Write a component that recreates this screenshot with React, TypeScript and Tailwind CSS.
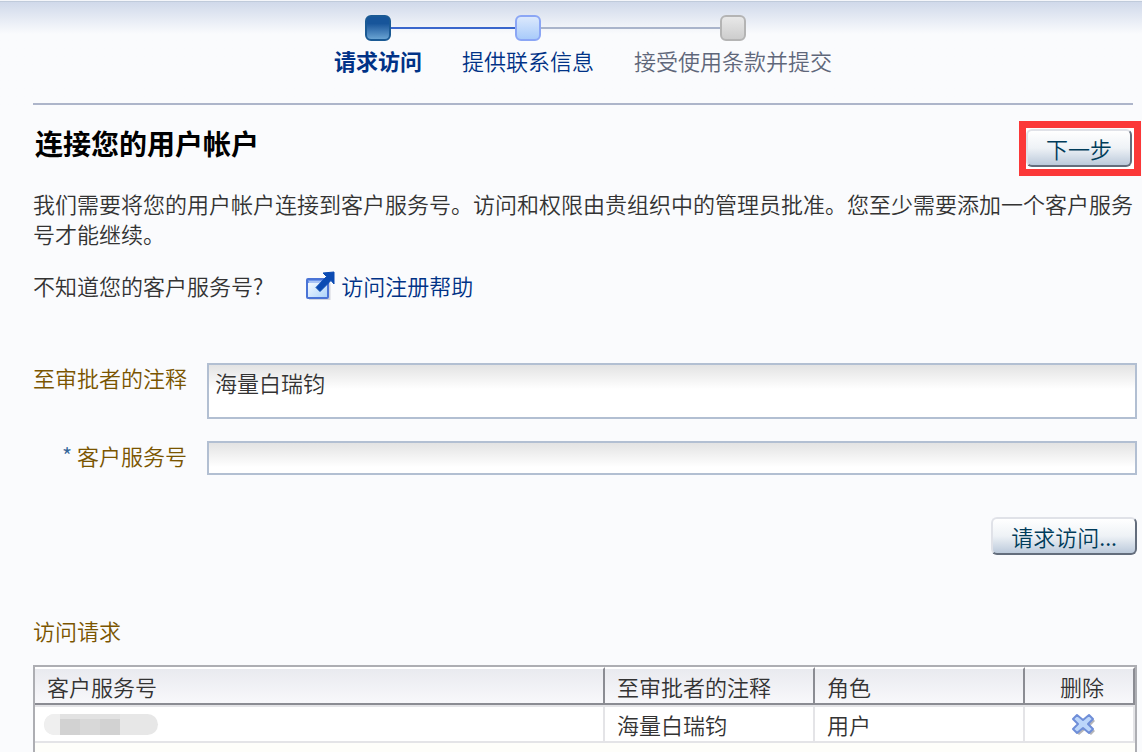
import { ReactNode, useState } from "react";

interface IStep {
  label: string;
  node: string;
  text: string;
  before: string;
  after: string;
}

interface IRequest {
  id: number;
  comment: string;
  role: string;
}

const steps: IStep[] = [
  {
    label: "请求访问",
    node: "border-[#1b5a94] from-[#17559a] from-30% to-[#69a3d2]",
    text: "font-bold text-[#003286]",
    before: "bg-transparent",
    after: "bg-[#3a66cc]",
  },
  {
    label: "提供联系信息",
    node: "border-[#8ba6f5] from-[#dbe8fc] to-[#a9cbfa]",
    text: "text-[#003286]",
    before: "bg-[#3a66cc]",
    after: "bg-[#a9b4cb]",
  },
  {
    label: "接受使用条款并提交",
    node: "border-[#b4b4b4] from-[#e8e8e8] to-[#cdcdcd]",
    text: "text-[#5f677a]",
    before: "bg-[#a9b4cb]",
    after: "bg-transparent",
  },
];

const initialRequests: IRequest[] = [
  { id: 1, comment: "海量白瑞钧", role: "用户" },
];

const fieldStyle =
  "block w-full min-w-0 resize-none rounded-none border-2 border-[#b2bfd2] bg-white bg-linear-to-b from-[#e3e3e3] to-white to-[24px] px-1.5 leading-[30px] text-[#333] outline-none";

export default function App() {
  const [requests, setRequests] = useState(initialRequests);

  return (
    <div
      lang="zh-CN"
      className="flex min-h-screen flex-col border-t border-[#f4f6fa] bg-[#fafbfd] font-['Noto_Sans_CJK_SC',sans-serif] text-[22px] leading-[30px] font-[350] text-[#333]"
    >
      <Stepper />
      <main className="flex flex-1 flex-col pr-[5px] pl-[33px]">
        <div className="-mr-1 flex items-start justify-between pt-4">
          <h1 className="pt-1 pl-0.5 text-[28px] leading-9 font-bold text-black">
            连接您的用户帐户
          </h1>
          <div className="border-[7px] border-[#fb3838] bg-white pt-px pr-0.5 pb-0.5">
            <PushButton>下一步</PushButton>
          </div>
        </div>
        <p className="mt-3">
          我们需要将您的用户帐户连接到客户服务号。访问和权限由贵组织中的管理员批准。您至少需要添加一个客户服务号才能继续。
        </p>
        <div className="mt-[22px] flex items-center gap-[42px]">
          <span>不知道您的客户服务号?</span>
          <a href="#help" className="flex items-center gap-1.5 text-[#003286]">
            <ExternalIcon />
            访问注册帮助
          </a>
        </div>
        <form
          className="mt-[63px] flex flex-col"
          onSubmit={(e) => e.preventDefault()}
        >
          <div className="grid grid-cols-[154px_1fr] items-start gap-x-5 gap-y-[22px]">
            <label htmlFor="comment" className="text-right leading-7 text-[#7a5500]">
              至审批者的注释
            </label>
            <textarea
              id="comment"
              className={`${fieldStyle} h-14 py-0.5`}
              defaultValue="海量白瑞钧"
            />
            <label htmlFor="csi" className="text-right leading-7 text-[#7a5500]">
              <span className="text-[#336699]">*</span> 客户服务号
            </label>
            <input id="csi" type="text" className={`${fieldStyle} h-[34px]`} />
          </div>
          <div className="mt-[42px] flex justify-end">
            <PushButton>请求访问...</PushButton>
          </div>
        </form>
        <h2 className="mt-[60px] text-[#7a5500]">访问请求</h2>
        <div className="mt-5 flex-1 border-x-2 border-t-2 border-[#adaeb3] bg-[#fefefa]">
          <table className="w-full table-fixed border-separate border-spacing-0 text-left">
            <colgroup>
              <col />
              <col className="w-[210px]" />
              <col className="w-[210px]" />
              <col className="w-[110px]" />
            </colgroup>
            <thead>
              <tr>
                <HeadCell>客户服务号</HeadCell>
                <HeadCell>至审批者的注释</HeadCell>
                <HeadCell>角色</HeadCell>
                <HeadCell center>删除</HeadCell>
              </tr>
            </thead>
            <tbody>
              {requests.map((r) => (
                <tr key={r.id}>
                  <BodyCell>
                    <MaskedNumber />
                  </BodyCell>
                  <BodyCell>{r.comment}</BodyCell>
                  <BodyCell>{r.role}</BodyCell>
                  <BodyCell>
                    <button
                      type="button"
                      aria-label="删除"
                      className="mx-auto block pr-1"
                      onClick={() =>
                        setRequests(requests.filter((x) => x.id !== r.id))
                      }
                    >
                      <DeleteIcon />
                    </button>
                  </BodyCell>
                </tr>
              ))}
            </tbody>
          </table>
        </div>
      </main>
    </div>
  );
}

function Stepper() {
  return (
    <header className="border-t border-[#c0cbdb] bg-linear-to-b from-[#d0d9ea] to-[#fafbfd] to-[32px] pr-[9px] pl-[33px]">
      <ol className="flex justify-center border-b-2 border-[#adb5ca] pt-[13px] pb-7">
        {steps.map((s) => (
          <li key={s.label} className="flex flex-col">
            <div className="flex items-center">
              <span className={`h-0.5 flex-1 ${s.before}`} />
              <span
                className={`size-[26px] rounded-md border-2 bg-linear-to-b ${s.node}`}
              />
              <span className={`h-0.5 flex-1 ${s.after}`} />
            </div>
            <span className={`mt-1 px-5 whitespace-nowrap ${s.text}`}>
              {s.label}
            </span>
          </li>
        ))}
      </ol>
    </header>
  );
}

function PushButton({ children }: { children: ReactNode }) {
  return (
    <button
      type="button"
      className="h-[38px] rounded-md border-2 border-t-[#e0e2e8] border-r-[#636d7c] border-b-[#636d7c] border-l-[#e0e2e8] bg-linear-to-b from-white via-[#eef2f6] to-[#bccadb] px-[18px] whitespace-nowrap text-[#003c5a]"
    >
      {children}
    </button>
  );
}

function HeadCell({ children, center }: { children: ReactNode; center?: boolean }) {
  return (
    <th
      scope="col"
      className={`h-[38px] border-t-2 border-r-2 border-b-2 border-t-white border-r-[#8b8c93] border-b-[#8b8c93] bg-linear-to-b from-[#e9eaef] to-[#f8f8fb] p-0 font-[350] ${
        center ? "pl-1.5 text-center" : "pl-3"
      }`}
    >
      {children}
    </th>
  );
}

function BodyCell({ children }: { children: ReactNode }) {
  return (
    <td className="h-[38px] border-t-2 border-r-2 border-b-2 border-[#e4e4e7] bg-white p-0 pl-3">
      {children}
    </td>
  );
}

// the number itself stays hidden behind a mosaic
function MaskedNumber() {
  return (
    <div className="-ml-[3px] flex h-[21px] w-[114px] overflow-hidden rounded-full bg-[#e7e7e7]">
      <span className="w-4 bg-[#efefef]" />
      <span className="w-5 border-t-[5px] border-[#e2e2e2] bg-[#d2d2d2]" />
      <span className="w-5 border-t-[5px] border-[#e2e2e2] bg-[#d8d8d8]" />
      <span className="w-5 border-t-[5px] border-[#e2e2e2] bg-[#d2d2d2]" />
    </div>
  );
}

function ExternalIcon() {
  return (
    <svg width="30" height="30" viewBox="0 0 30 30" aria-hidden="true">
      <defs>
        <linearGradient id="win" x1="0" y1="0" x2="1" y2="1">
          <stop offset="0" stopColor="#fff" />
          <stop offset="1" stopColor="#a9d2fa" />
        </linearGradient>
      </defs>
      <path d="M4 29.5h20.5V13" fill="none" stroke="#d3d6de" strokeWidth="2" />
      <rect x="2" y="9" width="21" height="19" rx="1" fill="url(#win)" stroke="#4a74d6" strokeWidth="2" />
      <path d="M3 11.5h19" stroke="#6f97ea" strokeWidth="3" />
      <path d="M4 12h12" stroke="#e4f0ff" strokeWidth="1" />
      <path
        d="M18 3l11-1v12l-3-3.5L15 21.5 11 17.500 21.500 6.500z"
        fill="#0b4bb3"
        stroke="#0b4bb3"
        strokeLinejoin="round"
      />
    </svg>
  );
}

function DeleteIcon() {
  return (
    <svg width="24" height="24" viewBox="0 0 24 24" aria-hidden="true">
      <path
        d="M2 7l4-4 6 5 6-5 4 4-5 5 5 5-4 4-6-5-6 5-4-4 5-5z"
        fill="#b5b5b8"
        transform="translate(2 2)"
      />
      <path
        d="M2 7l4-4 6 5 6-5 4 4-5 5 5 5-4 4-6-5-6 5-4-4 5-5z"
        fill="#bcd6fa"
        stroke="#6f8ed8"
        strokeWidth="2"
        strokeLinejoin="round"
      />
    </svg>
  );
}
